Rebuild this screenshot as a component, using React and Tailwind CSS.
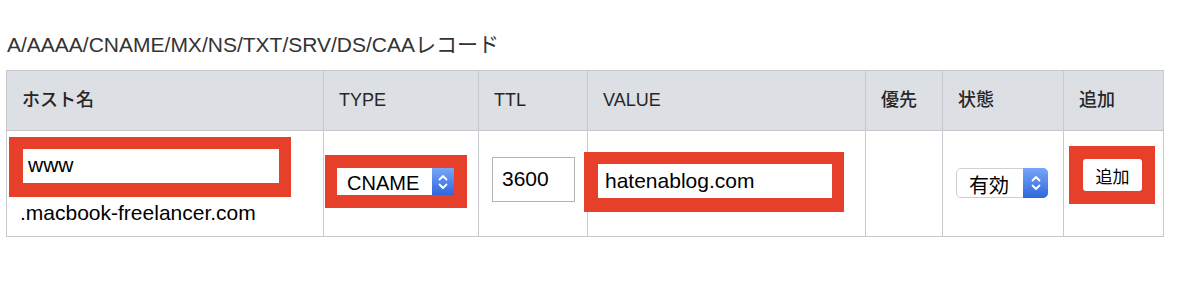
import React from 'react'

const headers = [
  { label: 'ホスト名', w: 'w-[317px]' },
  { label: 'TYPE', w: 'w-[155px]' },
  { label: 'TTL', w: 'w-[109px]' },
  { label: 'VALUE', w: 'w-[278px]' },
  { label: '優先', w: 'w-[77px]' },
  { label: '状態', w: 'w-[121px]' },
  { label: '追加', w: 'w-[100px]' },
]

function Stepper({ className }) {
  return (
    <span className={`flex items-center justify-center bg-gradient-to-b from-[#78a6f7] to-[#2c67dc] ${className}`}>
      <svg width="10" height="18" viewBox="0 0 10 18" fill="none" stroke="white" strokeWidth="1.8" strokeLinecap="round" strokeLinejoin="round">
        <path d="M1.5 6.5 L5 3 L8.5 6.5" />
        <path d="M1.5 11.5 L5 15 L8.5 11.5" />
      </svg>
    </span>
  )
}

export default function App() {
  return (
    <div className="w-[1200px] h-[293px] bg-white text-[#222] font-['Liberation_Sans','Noto_Sans_CJK_JP',sans-serif]">
      <div className="pt-[31px] pl-[7px] h-[70px] text-[21px] leading-[28px] text-[#333]">
        A/AAAA/CNAME/MX/NS/TXT/SRV/DS/CAAレコード
      </div>

      <table className="ml-[6px] w-[1157px] table-fixed border-collapse">
        <thead>
          <tr>
            {headers.map((h) => (
              <th
                key={h.label}
                className={`${h.w} h-[60px] border border-[#c7c9cd] bg-[#dcdfe4] pl-[15px] text-left align-middle text-[18px] font-medium text-[#262626]`}
              >
                {h.label}
              </th>
            ))}
          </tr>
        </thead>
        <tbody>
          <tr className="text-[21px] text-black">
            <td className="h-[106px] border border-[#c7c9cd] align-top pl-[2px] pt-[6px]">
              <div className="relative w-[282px] h-[60px] bg-[#e6402a] pl-[14px] pt-[12px]">
                <div className="w-[256px] h-[34px] bg-white pl-[5px] leading-[32px]">www</div>
              </div>
              <div className="pl-[11px] pt-[3px] leading-[26px]">.macbook-freelancer.com</div>
            </td>

            <td className="border border-[#c7c9cd] align-top pl-[1px] pt-[24px]">
              <div className="relative w-[142px] h-[53px] bg-[#e6402a] pl-[12px] pt-[13px]">
                <div className="flex w-[117px] h-[27px] bg-white">
                  <span className="flex-1 pl-[10px] text-[20px] leading-[30px]">CNAME</span>
                  <Stepper className="w-[22px] h-[27px]" />
                </div>
              </div>
            </td>

            <td className="border border-[#c7c9cd] align-top pl-[13px] pt-[26px]">
              <div className="w-[83px] h-[45px] border border-[#b3b3b3] bg-white pl-[9px] leading-[42px]">3600</div>
            </td>

            <td className="border border-[#c7c9cd] align-top pt-[21px]">
              <div className="relative -ml-[4px] w-[260px] h-[60px] bg-[#e6402a] pl-[14px] pt-[12px]">
                <div className="w-[234px] h-[34px] bg-white pl-[7px] leading-[33px]">hatenablog.com</div>
              </div>
            </td>

            <td className="border border-[#c7c9cd]"></td>

            <td className="border border-[#c7c9cd] align-top pl-[13px] pt-[37px]">
              <div className="flex w-[92px] h-[30px] rounded-[5px] border border-[#d0d0d0] bg-white">
                <span className="flex-1 pl-[12px] pt-[2px] text-[20px] leading-[27px] font-['Noto_Sans_CJK_JP',sans-serif]">有効</span>
                <Stepper className="w-[25px] -my-px -mr-px h-[30px] rounded-r-[5px]" />
              </div>
            </td>

            <td className="border border-[#c7c9cd] align-top pl-[5px] pt-[15px]">
              <div className="relative w-[86px] h-[58px] bg-[#e6402a] pl-[14px] pt-[13px]">
                <div className="flex w-[59px] h-[32px] items-center justify-center rounded-[3px] bg-white pt-[2px] text-[17px] font-['Noto_Sans_CJK_JP',sans-serif]">
                  追加
                </div>
              </div>
            </td>
          </tr>
        </tbody>
      </table>
    </div>
  )
}
